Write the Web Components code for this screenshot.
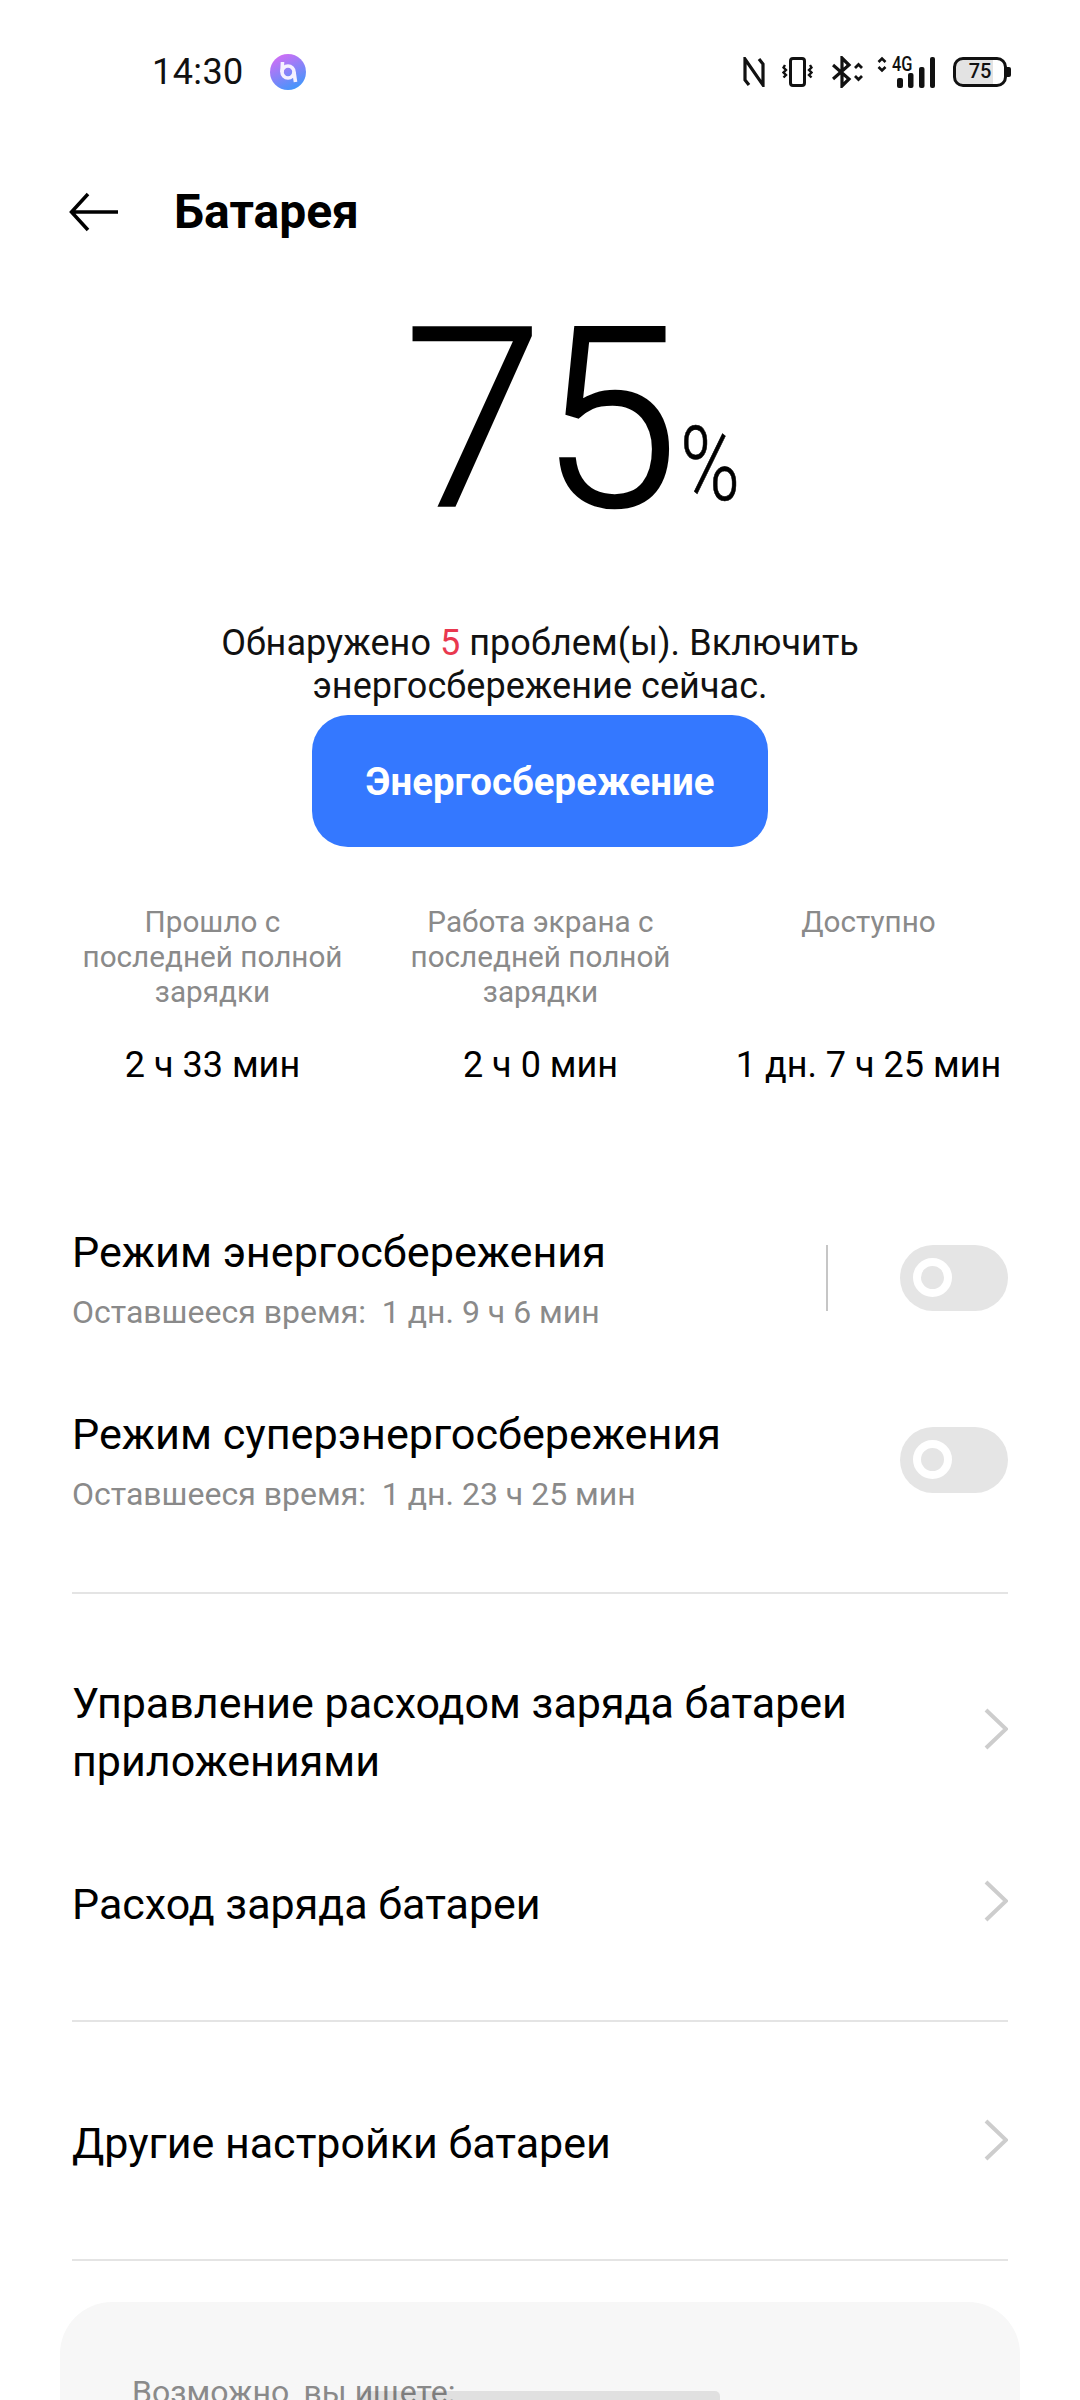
<!DOCTYPE html>
<html lang="ru">
<head>
<meta charset="utf-8">
<style>
  html, body { margin: 0; padding: 0; background: #fff; }
  body { font-family: Roboto, "Liberation Sans", sans-serif; color: #000; }
</style>
</head>
<body>

<battery-screen>
  <status-bar></status-bar>
  <app-header>Батарея</app-header>
  <battery-level value="75"></battery-level>
  <saver-prompt problems="5" action="Энергосбережение"></saver-prompt>

  <stats-row>
    <stat-item value="2 ч 33 мин">Прошло с последней полной зарядки</stat-item>
    <stat-item value="2 ч 0 мин">Работа экрана с последней полной зарядки</stat-item>
    <stat-item value="1 дн. 7 ч 25 мин">Доступно</stat-item>
  </stats-row>

  <mode-row title="Режим энергосбережения" sub="Оставшееся время:  1 дн. 9 ч 6 мин" separator style="margin-top:137px"></mode-row>
  <mode-row title="Режим суперэнергосбережения" sub="Оставшееся время:  1 дн. 23 ч 25 мин" style="margin-top:75px"></mode-row>

  <list-divider style="margin-top:78px"></list-divider>

  <nav-row style="margin-top:80px">Управление расходом заряда батареи приложениями</nav-row>
  <nav-row style="margin-top:85px">Расход заряда батареи</nav-row>

  <list-divider style="margin-top:87px"></list-divider>

  <nav-row style="margin-top:92px">Другие настройки батареи</nav-row>

  <list-divider style="margin-top:87px"></list-divider>

  <suggest-card>Возможно, вы ищете:</suggest-card>
  <gesture-pill></gesture-pill>
</battery-screen>

<script>
// Petit helper : chaque élément crée son shadow root ouvert avec son markup
class Base extends HTMLElement {
  connectedCallback() {
    if (!this.shadowRoot) this.attachShadow({ mode: 'open' });
    this.shadowRoot.innerHTML = this.markup();
  }
  attr(name) { return this.getAttribute(name) || ''; }
}

class BatteryScreen extends Base {
  markup() {
    return `
      <style>
        :host { display: flex; flex-direction: column; position: relative; width: 1080px; height: 2400px; overflow: hidden; background: #fff; }
      </style>
      <slot></slot>`;
  }
}

class StatusBar extends Base {
  markup() {
    return `
      <style>
        :host { display: flex; align-items: center; height: 40px; padding: 52px 69px 0 152px; }
        .time { font-size: 36px; letter-spacing: .4px; color: #111; line-height: 40px; }
        .app { margin-left: 26px; width: 36px; height: 36px; }
        .right { margin-left: auto; display: flex; align-items: center; }
        svg { display: block; flex: none; }
        .cell { position: relative; width: 58px; height: 32px; margin-right: 18px; }
        .cell span { position: absolute; left: 15px; top: -2px; font-size: 20px; font-weight: 500; line-height: 20px; color: #111; transform: scaleX(.82); transform-origin: left top; }
        .batt { box-sizing: border-box; width: 54px; height: 30px; border: 3.500px solid #111; border-radius: 10px; background: linear-gradient(90deg, #e3e3e3 0 78%, #fff 78%); font-size: 20px; line-height: 23px; font-weight: 500; text-align: center; color: #111; }
        .nub { width: 4px; height: 10px; background: #111; border-radius: 0 2px 2px 0; }
      </style>
      <span class="time">14:30</span>
      <svg class="app" viewBox="0 0 36 36">
        <defs><linearGradient id="g" x1="0.2" y1="0" x2="0.7" y2="1">
          <stop offset="0" stop-color="#d66cf5"/><stop offset="1" stop-color="#3f97fb"/>
        </linearGradient></defs>
        <circle cx="18" cy="18" r="18" fill="url(#g)"/>
        <circle cx="18" cy="18" r="6" fill="none" stroke="#f6f0ff" stroke-width="3.600"/>
        <path d="M12.500 8l-.5 10M24 18l1.500 10" stroke="#f6f0ff" stroke-width="3.600" fill="none"/>
      </svg>
      <div class="right">
        <svg width="22" height="30" viewBox="0 0 22 30" fill="none" stroke="#111" stroke-width="3.200" style="margin-right:17px">
          <path d="M6 28l-4-5V2l18 26V7l-4-5"/>
        </svg>
        <svg width="31" height="30" viewBox="0 0 31 30" fill="none" stroke="#111" stroke-width="3" style="margin-right:19px">
          <rect x="8.500" y="1.500" width="14" height="27" rx="2.500"/>
          <path d="M3 8l-1.500 2.500L4 13l-2.500 2.500L4 18l-2.500 2.500M28 8l1.500 2.500L27 13l2.500 2.500L27 18l2.500 2.500" stroke-width="2.400"/>
        </svg>
        <svg width="31" height="32" viewBox="0 0 31 32" fill="none" stroke="#111" stroke-width="3.200" style="margin-right:14px">
          <path d="M1 9l16 14-7 7V2l7 7L1 23"/>
          <path d="M23 12l3.500-3.500L30 12M23 20l3.500 3.500L30 20" stroke-width="2.800"/>
        </svg>
        <div class="cell">
          <svg width="58" height="32" viewBox="0 0 58 32" fill="#111">
            <rect x="20" y="22" width="6" height="10" rx="2"/>
            <rect x="31" y="17" width="5.500" height="15" rx="2"/>
            <rect x="42" y="11" width="5.500" height="21" rx="2"/>
            <rect x="53" y="1" width="5" height="31" rx="2"/>
            <path d="M1.500 6l3.500-3.500L8.500 6M1.500 11l3.500 3.500L8.500 11" fill="none" stroke="#111" stroke-width="2.600"/>
          </svg>
          <span>4G</span>
        </div>
        <div class="batt">75</div>
        <div class="nub"></div>
      </div>`;
  }
}

class AppHeader extends Base {
  markup() {
    return `
      <style>
        :host { display: flex; align-items: center; height: 60px; padding: 90px 0 0 69px; }
        svg { display: block; }
        h1 { margin: 0 0 0 55px; font-size: 48px; font-weight: 700; line-height: 60px; color: #000; }
      </style>
      <svg width="50" height="40" viewBox="0 0 50 40" fill="none" stroke="#000" stroke-width="3.500">
        <path d="M49 20H2.500M19 2L2.500 20 19 38"/>
      </svg>
      <h1><slot></slot></h1>`;
  }
}

class BatteryLevel extends Base {
  markup() {
    return `
      <style>
        :host { display: flex; justify-content: center; align-items: baseline; height: 290px; margin-top: 34px; padding-left: 66px; }
        .num { font-size: 250px; font-weight: 300; line-height: 290px; color: #000; letter-spacing: -3px; -webkit-text-stroke: 2.500px #000; }
        .pct { display: inline-block; font-size: 104px; font-weight: 300; color: #000; transform: translateY(-6px) scaleX(.78); transform-origin: left bottom; width: 62px; margin-left: 4px; -webkit-text-stroke: .6px #000; }
      </style>
      <span class="num">${this.attr('value')}</span><span class="pct">%</span>`;
  }
}

class SaverPrompt extends Base {
  markup() {
    return `
      <style>
        :host { display: flex; flex-direction: column; align-items: center; margin-top: 56px; }
        p { margin: 0; width: 700px; font-size: 36px; line-height: 43px; text-align: center; color: #111; letter-spacing: .05px; }
        b { font-weight: 400; color: #e9384f; }
        button { margin-top: 7px; width: 456px; height: 132px; padding: 0; border: 0; border-radius: 36px; background: #3478ff; color: #fff; font: 700 38.400px Roboto, sans-serif; }
      </style>
      <p>Обнаружено <b>${this.attr('problems')}</b> проблем(ы). Включить<br>энергосбережение сейчас.</p>
      <button>${this.attr('action')}</button>`;
  }
}

class StatsRow extends Base {
  markup() {
    return `
      <style>
        :host { display: grid; grid-template-columns: 328px 328px 328px; justify-content: center; margin-top: 57px; padding-left: 1px; }
      </style>
      <slot></slot>`;
  }
}

class StatItem extends Base {
  markup() {
    return `
      <style>
        :host { display: flex; flex-direction: column; align-items: center; text-align: center; }
        .label { width: 280px; height: 105px; font-size: 29.700px; line-height: 35px; color: #8a8a8a; }
        .value { margin-top: 33px; font-size: 36px; line-height: 46px; color: #000; white-space: nowrap; }
      </style>
      <div class="label"><slot></slot></div>
      <div class="value">${this.attr('value')}</div>`;
  }
}

class ToggleSwitch extends Base {
  markup() {
    return `
      <style>
        :host { display: block; width: 108px; height: 66px; margin-bottom: 2px; border-radius: 33px; background: #e5e5e5; position: relative; flex: none; }
        i { position: absolute; left: 13px; top: 13.500px; width: 23px; height: 23px; border: 8px solid #fff; border-radius: 50%; }
      </style>
      <i></i>`;
  }
}

class ModeRow extends Base {
  markup() {
    return `
      <style>
        :host { display: flex; align-items: center; padding: 0 72px; }
        .text { flex: 1; }
        .title { font-size: 43.200px; line-height: 56px; color: #000; }
        .sub { margin-top: 11px; font-size: 32px; line-height: 40px; color: #8a8a8a; white-space: pre; }
        .sep { width: 2px; height: 66px; margin-bottom: 2px; background: #c6c6c6; margin-right: 72px; }
      </style>
      <div class="text">
        <div class="title">${this.attr('title')}</div>
        <div class="sub">${this.attr('sub')}</div>
      </div>
      ${this.hasAttribute('separator') ? '<div class="sep"></div>' : ''}
      <toggle-switch></toggle-switch>`;
  }
}

class ListDivider extends Base {
  markup() {
    return `
      <style>
        :host { display: block; height: 2px; margin: 0 72px; background: #e4e4e4; flex: none; }
      </style>`;
  }
}

class NavRow extends Base {
  markup() {
    return `
      <style>
        :host { display: flex; align-items: center; padding: 0 72px; }
        .text { flex: 1; font-size: 43px; line-height: 58px; color: #000; padding-right: 120px; }
        svg { display: block; flex: none; margin-bottom: 6px; }
      </style>
      <div class="text"><slot></slot></div>
      <svg width="24" height="42" viewBox="0 0 24 42" fill="none" stroke="#cdcdcd" stroke-width="4">
        <path d="M2 2l20 19L2 40"/>
      </svg>`;
  }
}

class SuggestCard extends Base {
  markup() {
    return `
      <style>
        :host { display: block; margin: 41px 60px 0; padding: 70px 72px 0; height: 300px; border-radius: 52px; background: #f7f7f7; flex: none; }
        div { font-size: 32px; line-height: 40px; color: #8a8a8a; }
      </style>
      <div><slot></slot></div>`;
  }
}

// La barre de geste passe par-dessus le contenu, en bas de l'écran
class GesturePill extends Base {
  markup() {
    return `
      <style>
        :host { display: block; position: absolute; left: 360px; bottom: 0; width: 360px; height: 9px; border-radius: 5px 5px 0 0; background: rgba(0,0,0,.09); }
      </style>`;
  }
}

customElements.define('battery-screen', BatteryScreen);
customElements.define('status-bar', StatusBar);
customElements.define('app-header', AppHeader);
customElements.define('battery-level', BatteryLevel);
customElements.define('saver-prompt', SaverPrompt);
customElements.define('stats-row', StatsRow);
customElements.define('stat-item', StatItem);
customElements.define('toggle-switch', ToggleSwitch);
customElements.define('mode-row', ModeRow);
customElements.define('list-divider', ListDivider);
customElements.define('nav-row', NavRow);
customElements.define('suggest-card', SuggestCard);
customElements.define('gesture-pill', GesturePill);
</script>
</body>
</html>
